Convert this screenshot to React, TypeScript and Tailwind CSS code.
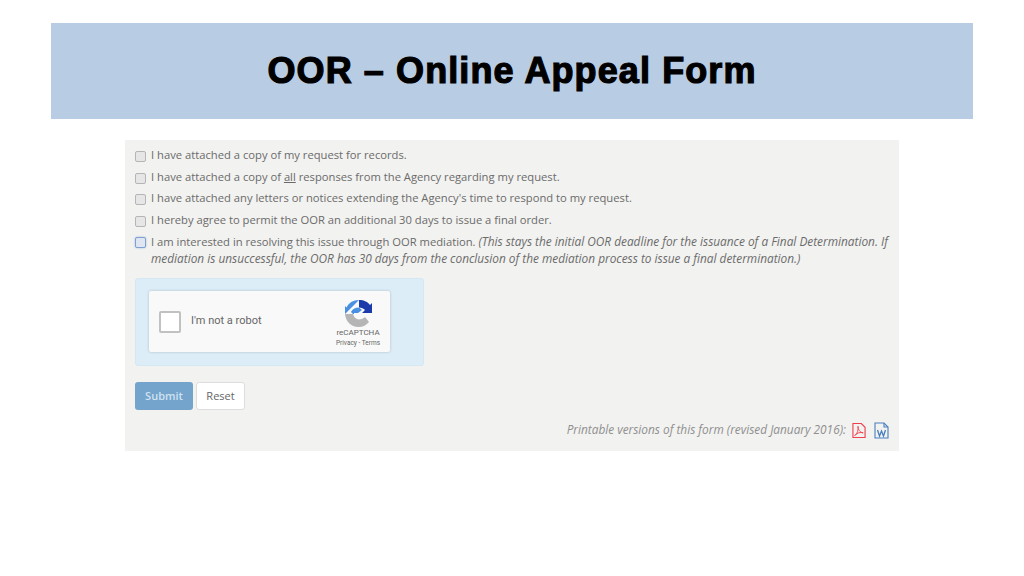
import React from "react";

const Check = ({ on = false }: { on?: boolean }) => (
  <span className={`w-[11px] h-[11px] shrink-0 rounded-[2px] border mt-[4px] ${on ? "border-[#7f9fd0] bg-[#dfe6f2] shadow-[0_0_2px_#9db8e0]" : "border-[#b5b5b5] bg-[#e6e6e6]"}`} />
);

const Row = ({ children, on = false }: { children: React.ReactNode; on?: boolean }) => (
  <div className="flex gap-[5px] text-[11.22px] leading-[16px] text-[#6b6b6b]">
    <Check on={on} />
    <div className="flex-1">{children}</div>
  </div>
);

const Recaptcha = () => (
  <svg width="27" height="27" viewBox="0 0 27 27">
    <path d="M14 0 C19 0 23 2 25 5 L27 3 V13 H17 L20 10 C18.5 8.5 16.5 7.5 14 7.5 Z" fill="#1c3aa9" />
    <path d="M14 0 C8 0 3.5 3 1.5 7.5 L0 6 V14 H8 L6 12 C7 9.5 10 7.5 14 7.5 L17 10 L13 13 L9 13 L9 14 H0 Z" fill="#4a90e2" />
    <path d="M0 14 H8 C9 17 11 19.5 14 19.5 C16.5 19.5 18.5 18.5 20 17 L24 22 C21.5 25 18 27 13.5 27 C6 27 0.5 21 0 14 Z" fill="#b5b5b5" />
  </svg>
);

export default function App() {
  return (
    <div className="w-[1024px] h-[576px] bg-white overflow-hidden pt-[23px] font-['Open_Sans',sans-serif]">
      <div className="mx-[51px] w-[922px] h-[96px] bg-[#b8cce4] flex items-center justify-center">
        <h1 className="font-['Liberation_Sans',sans-serif] font-bold text-[36px] leading-none tracking-[1.1px] text-black [-webkit-text-stroke:1.2px_#000]">
          OOR – Online Appeal Form
        </h1>
      </div>
      <div className="mt-[21px] ml-[125px] w-[774px] h-[311px] bg-[#f2f2f0] pt-[7px] px-[10px] flex flex-col">
        <div className="flex flex-col gap-[5.6px]">
          <Row>I have attached a copy of my request for records.</Row>
          <Row>I have attached a copy of <span className="underline">all</span> responses from the Agency regarding my request.</Row>
          <Row>I have attached any letters or notices extending the Agency's time to respond to my request.</Row>
          <Row>I hereby agree to permit the OOR an additional 30 days to issue a final order.</Row>
          <Row on>
            I am interested in resolving this issue through OOR mediation.{" "}
            <em className="text-[11.85px]">(This stays the initial OOR deadline for the issuance of a Final Determination. If mediation is unsuccessful, the OOR has 30 days from the conclusion of the mediation process to issue a final determination.)</em>
          </Row>
        </div>
        <div className="mt-[11px] w-[289px] h-[88px] rounded-[3px] bg-[#dcedf7] border border-[#d3e8f3] pt-[12px] pl-[12px]">
          <div className="ml-[1px] w-[241px] h-[61px] bg-[#f9f9f9] rounded-[2px] shadow-[0_0_3px_rgba(0,0,0,0.2)] flex items-center pl-[10px] pr-[9px] font-['Roboto',sans-serif]">
            <span className="w-[22px] h-[22px] bg-white border-2 border-[#c1c1c1] rounded-[2px]" />
            <span className="ml-[10px] text-[11px] text-[#666] flex-1 -mt-[1px]">I'm not a robot</span>
            <div className="flex flex-col items-center w-[46px] mt-[5px]">
              <Recaptcha />
              <span className="text-[8px] leading-[10px] mt-[1px] text-[#666]">reCAPTCHA</span>
              <span className="text-[6.5px] leading-[9px] mt-[1px] text-[#666]">Privacy - Terms</span>
            </div>
          </div>
        </div>
        <div className="mt-[16px] flex gap-[3px]">
          <button className="w-[58px] h-[28px] rounded-[3px] bg-[#74a3cc] text-[#cfe2f0] text-[11px] font-semibold">Submit</button>
          <button className="w-[49px] h-[28px] rounded-[3px] bg-white border border-[#ddd] text-[#666] text-[11px]">Reset</button>
        </div>
        <div className="mt-[11px] flex items-center justify-end gap-[6px] text-[11.85px] italic text-[#8f8f8f]">
          <span>Printable versions of this form (revised January 2016):</span>
          <svg width="14" height="17" viewBox="0 0 15 17" fill="none" stroke="#ef3f4c" strokeWidth="1.2">
            <path d="M1 1 H10 L14 5 V16 H1 Z" />
            <path d="M3 14 C6 12 7 7 6.5 4 C6 7 9 11 12 11 C9 10 5 11 3 14 Z" strokeWidth="1" />
          </svg>
          <svg className="ml-[2px]" width="15" height="17" viewBox="0 0 15 17" fill="none" stroke="#4a7fc0" strokeWidth="1.1">
            <path d="M1 1 H10 L14 5 V16 H1 Z" />
            <path d="M10 1 V5 H14" />
            <path d="M3.5 8 L5.5 14 L7.5 9 L9.5 14 L11.5 8" strokeWidth="1.3" />
          </svg>
        </div>
      </div>
    </div>
  );
}
